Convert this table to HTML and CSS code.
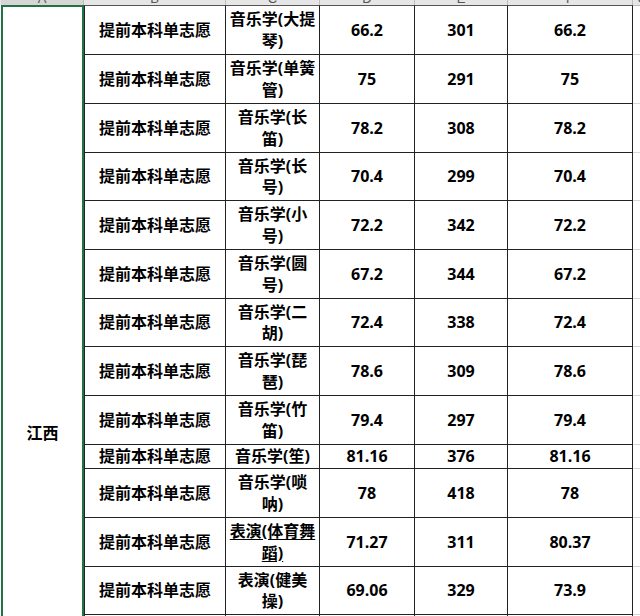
FILE: index.html
```html
<!DOCTYPE html>
<html lang="zh-CN">
<head>
<meta charset="utf-8">
<title>江西 提前本科单志愿</title>
<link rel="stylesheet" href="styles.css">
</head>
<body>
<div class="sheet">
  <div class="colhead">
    <div class="ch w-a"><span>A</span></div>
    <div class="ch w-b"><span>B</span></div>
    <div class="ch w-c"><span>C</span></div>
    <div class="ch w-d"><span>D</span></div>
    <div class="ch w-e"><span>E</span></div>
    <div class="ch w-f"><span>F</span></div>
    <div class="ch w-g"><span>G</span></div>
  </div>
  <div class="grid">
    <div class="prov">江西</div>

    <div class="cell top lb">提前本科单志愿</div>
    <div class="cell top">音乐学(大提琴)</div>
    <div class="cell top">66.2</div>
    <div class="cell top">301</div>
    <div class="cell top">66.2</div>
    <div class="cell top ext"></div>

    <div class="cell lb">提前本科单志愿</div>
    <div class="cell">音乐学(单簧管)</div>
    <div class="cell">75</div>
    <div class="cell">291</div>
    <div class="cell">75</div>
    <div class="cell ext"></div>

    <div class="cell lb">提前本科单志愿</div>
    <div class="cell">音乐学(长笛)</div>
    <div class="cell">78.2</div>
    <div class="cell">308</div>
    <div class="cell">78.2</div>
    <div class="cell ext"></div>

    <div class="cell lb">提前本科单志愿</div>
    <div class="cell">音乐学(长号)</div>
    <div class="cell">70.4</div>
    <div class="cell">299</div>
    <div class="cell">70.4</div>
    <div class="cell ext"></div>

    <div class="cell lb">提前本科单志愿</div>
    <div class="cell">音乐学(小号)</div>
    <div class="cell">72.2</div>
    <div class="cell">342</div>
    <div class="cell">72.2</div>
    <div class="cell ext"></div>

    <div class="cell lb">提前本科单志愿</div>
    <div class="cell">音乐学(圆号)</div>
    <div class="cell">67.2</div>
    <div class="cell">344</div>
    <div class="cell">67.2</div>
    <div class="cell ext"></div>

    <div class="cell lb">提前本科单志愿</div>
    <div class="cell">音乐学(二胡)</div>
    <div class="cell">72.4</div>
    <div class="cell">338</div>
    <div class="cell">72.4</div>
    <div class="cell ext"></div>

    <div class="cell lb">提前本科单志愿</div>
    <div class="cell">音乐学(琵琶)</div>
    <div class="cell">78.6</div>
    <div class="cell">309</div>
    <div class="cell">78.6</div>
    <div class="cell ext"></div>

    <div class="cell lb">提前本科单志愿</div>
    <div class="cell">音乐学(竹笛)</div>
    <div class="cell">79.4</div>
    <div class="cell">297</div>
    <div class="cell">79.4</div>
    <div class="cell ext"></div>

    <div class="cell lb">提前本科单志愿</div>
    <div class="cell">音乐学(笙)</div>
    <div class="cell">81.16</div>
    <div class="cell">376</div>
    <div class="cell">81.16</div>
    <div class="cell ext"></div>

    <div class="cell lb">提前本科单志愿</div>
    <div class="cell">音乐学(唢呐)</div>
    <div class="cell">78</div>
    <div class="cell">418</div>
    <div class="cell">78</div>
    <div class="cell ext"></div>

    <div class="cell lb">提前本科单志愿</div>
    <div class="cell"><span class="ul">表演(体育舞蹈)</span></div>
    <div class="cell">71.27</div>
    <div class="cell">311</div>
    <div class="cell">80.37</div>
    <div class="cell ext"></div>

    <div class="cell lb">提前本科单志愿</div>
    <div class="cell">表演(健美操)</div>
    <div class="cell">69.06</div>
    <div class="cell">329</div>
    <div class="cell">73.9</div>
    <div class="cell ext"></div>

    <div class="cell lb"></div>
    <div class="cell"></div>
    <div class="cell"></div>
    <div class="cell"></div>
    <div class="cell"></div>
    <div class="cell ext"></div>
  </div>
</div>
</body>
</html>
```
FILE: styles.css
```css
html, body {
  margin: 0;
  padding: 0;
  background: #ffffff;
}

.sheet {
  width: 640px;
  height: 616px;
  overflow: hidden;
  font-family: "Open Sans", "Noto Sans CJK SC", sans-serif;
  color: #000;
}

.colhead {
  display: flex;
  height: 5px;
  background: #e6e6e6;
  padding-left: 1px;
  overflow: hidden;
}

.ch {
  flex: none;
  height: 5px;
  display: flex;
  align-items: flex-end;
  justify-content: center;
  border-right: 1px solid #bdbdbd;
  box-sizing: border-box;
  overflow: hidden;
  font-family: "Liberation Sans", sans-serif;
  font-size: 13px;
  color: #555;
}

.ch span {
  line-height: 11px;
  display: block;
  margin-bottom: 1px;
}

.w-a { width: 83px; background: #d6d6d6; }
.w-b { width: 142px; }
.w-c { width: 94px; }
.w-d { width: 95px; }
.w-e { width: 93px; }
.w-f { width: 125px; }
.w-g { width: 20px; }

.grid {
  display: grid;
  padding-left: 1px;
  grid-template-columns: 83px 142px 94px 95px 93px 125px 20px;
  grid-template-rows: 50px 49px 49px 48px 49px 49px 48px 49px 49px 24px 49px 49px 48px 244px;
}

.prov {
  grid-column: 1;
  grid-row: 1 / 15;
  border: 2px solid #217346;
  border-bottom: none;
  display: flex;
  align-items: center;
  justify-content: center;
  font-weight: 700;
  font-size: 16px;
  line-height: 22px;
  padding-bottom: 0;
  box-sizing: border-box;
}

.cell {
  box-sizing: border-box;
  border-right: 1px solid #222;
  border-bottom: 1px solid #222;
  display: flex;
  align-items: center;
  justify-content: center;
  text-align: center;
  padding: 0 3px;
  font-weight: 700;
  font-size: 16px;
  line-height: 21.5px;
  padding-top: 1px;
}

.cell.top {
  border-top: 1px solid #555;
}

.cell.lb {
  border-left: 1px solid #222;
}

.cell.ext {
  border-right: none;
  border-bottom: 1px solid #d6d6d6;
}

.cell.top.ext {
  border-top: 1px solid #bdbdbd;
}

.ul {
  text-decoration: underline;
  text-underline-offset: 2px;
}
```
